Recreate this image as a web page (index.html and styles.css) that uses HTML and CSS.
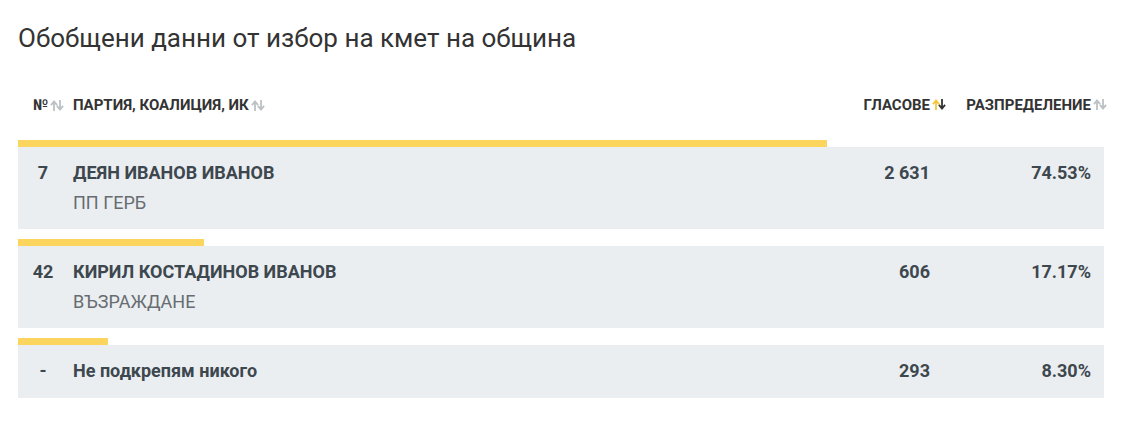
FILE: index.html
```html
<!DOCTYPE html>
<html lang="bg">
<head>
<meta charset="utf-8">
<link rel="stylesheet" href="styles.css">
</head>
<body>
<div class="page">
  <h1 class="title">Обобщени данни от избор на кмет на община</h1>
  <div class="table">
    <div class="head">
      <div class="h-num">№<svg class="sort" viewBox="0 0 14 11" width="14" height="11"><path class="a-up" d="M4 10V2M1.5 4.5L4 1.5L6.5 4.5"/><path class="a-dn" d="M10 1v8M7.5 6.5L10 9.5L12.5 6.5"/></svg></div>
      <div class="h-name">ПАРТИЯ, КОАЛИЦИЯ, ИК<svg class="sort" viewBox="0 0 14 11" width="14" height="11"><path class="a-up" d="M4 10V2M1.5 4.5L4 1.5L6.5 4.5"/><path class="a-dn" d="M10 1v8M7.5 6.5L10 9.5L12.5 6.5"/></svg></div>
      <div class="h-votes"><span class="hl">ГЛАСОВЕ<svg class="sort over" viewBox="0 0 14 11" width="14" height="11"><path class="a-up on-up" d="M4 10V2M1.5 4.5L4 1.5L6.5 4.5"/><path class="a-dn on-dn" d="M10 1v8M7.5 6.5L10 9.5L12.5 6.5"/></svg></span></div>
      <div class="h-pct"><span class="hl">РАЗПРЕДЕЛЕНИЕ<svg class="sort over" viewBox="0 0 14 11" width="14" height="11"><path class="a-up" d="M4 10V2M1.5 4.5L4 1.5L6.5 4.5"/><path class="a-dn" d="M10 1v8M7.5 6.5L10 9.5L12.5 6.5"/></svg></span></div>
    </div>

    <div class="entry">
      <div class="bar" style="width:74.53%"></div>
      <div class="row">
        <div class="num">7</div>
        <div class="name"><div class="cand">ДЕЯН ИВАНОВ ИВАНОВ</div><div class="party">ПП ГЕРБ</div></div>
        <div class="votes">2 631</div>
        <div class="pct">74.53%</div>
      </div>
    </div>

    <div class="entry">
      <div class="bar" style="width:17.17%"></div>
      <div class="row">
        <div class="num">42</div>
        <div class="name"><div class="cand">КИРИЛ КОСТАДИНОВ ИВАНОВ</div><div class="party">ВЪЗРАЖДАНЕ</div></div>
        <div class="votes">606</div>
        <div class="pct">17.17%</div>
      </div>
    </div>

    <div class="entry">
      <div class="bar" style="width:8.30%"></div>
      <div class="row">
        <div class="num">-</div>
        <div class="name"><div class="cand">Не подкрепям никого</div></div>
        <div class="votes">293</div>
        <div class="pct">8.30%</div>
      </div>
    </div>
  </div>
</div>
</body>
</html>
```

FILE: styles.css
```css
* { box-sizing: border-box; }
body {
  margin: 0;
  background: #fff;
  font-family: "Roboto", "Liberation Sans", sans-serif;
  color: #3d474e;
}
.page {
  padding: 18px 18px 0 18px;
}
.title {
  margin: 0;
  font-weight: 400;
  font-size: 26px;
  line-height: 40px;
  color: #333;
}
.table {
  margin-top: 37px;
}
.head {
  display: grid;
  grid-template-columns: 55px 1fr 120px 161px;
  padding-right: 13px;
  font-weight: 700;
  font-size: 15px;
  line-height: 20px;
  color: #333;
  margin-bottom: 25px;
}
.h-num { padding-left: 15px; white-space: nowrap; }
.h-votes, .h-pct { text-align: right; }
.hl { position: relative; }
.sort {
  display: inline-block;
  vertical-align: -1px;
  margin-left: 2px;
  fill: none;
  stroke-width: 1.8;
  stroke-linecap: square;
}
.sort.over {
  position: absolute;
  left: 100%;
  top: 3px;
}
.a-up, .a-dn { stroke: #bcc1c5; }
.on-up { stroke: #f5c53a; }
.on-dn { stroke: #333; }
.entry { margin-bottom: 10px; }
.bar {
  height: 7px;
  background: #fcd55f;
}
.row {
  display: grid;
  grid-template-columns: 55px 1fr 120px 161px;
  padding: 11px 13px 12px 0;
  background: #ebeef1;
  font-size: 18px;
  line-height: 30px;
  font-weight: 700;
}
.num { text-align: center; padding-right: 5px; }
.party { font-weight: 400; color: #666c70; line-height: 29px; }
.votes, .pct { text-align: right; }
```
